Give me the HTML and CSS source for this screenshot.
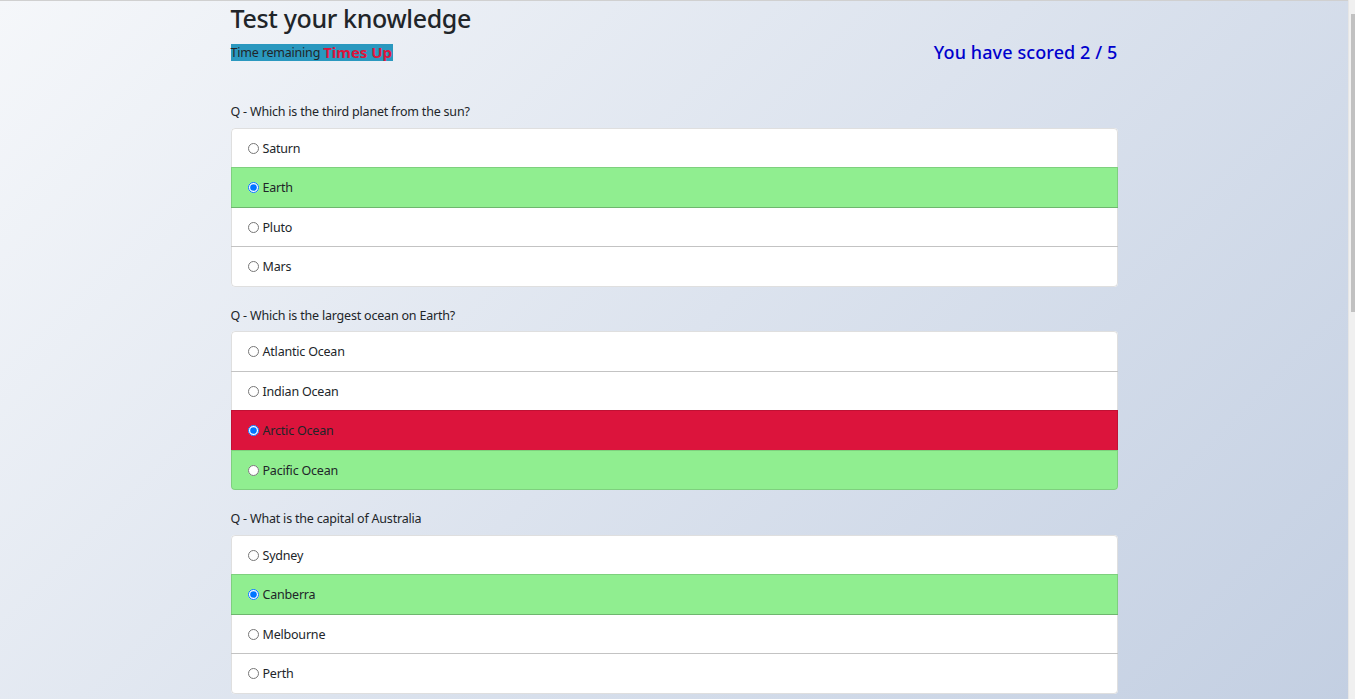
FILE: index.html
```html
<!DOCTYPE html>
<html lang="en">
<head>
<meta charset="utf-8">
<title>Quiz</title>
<link rel="stylesheet" href="styles.css">
</head>
<body>
<div class="container">
  <h3 class="title">Test your knowledge</h3>
  <div class="status">
    <span class="timer">Time remaining <b class="times-up">Times Up</b></span>
    <span class="score">You have scored 2 / 5</span>
  </div>

  <div class="question">
    <p class="q-text">Q - Which is the third planet from the sun?</p>
    <ul class="list-group">
      <li class="item"><label><input type="radio" name="q1">Saturn</label></li>
      <li class="item correct"><label><input type="radio" name="q1" checked>Earth</label></li>
      <li class="item"><label><input type="radio" name="q1">Pluto</label></li>
      <li class="item"><label><input type="radio" name="q1">Mars</label></li>
    </ul>
  </div>

  <div class="question">
    <p class="q-text">Q - Which is the largest ocean on Earth?</p>
    <ul class="list-group">
      <li class="item"><label><input type="radio" name="q2">Atlantic Ocean</label></li>
      <li class="item"><label><input type="radio" name="q2">Indian Ocean</label></li>
      <li class="item wrong"><label><input type="radio" name="q2" checked>Arctic Ocean</label></li>
      <li class="item correct"><label><input type="radio" name="q2">Pacific Ocean</label></li>
    </ul>
  </div>

  <div class="question">
    <p class="q-text">Q - What is the capital of Australia</p>
    <ul class="list-group">
      <li class="item"><label><input type="radio" name="q3">Sydney</label></li>
      <li class="item correct"><label><input type="radio" name="q3" checked>Canberra</label></li>
      <li class="item"><label><input type="radio" name="q3">Melbourne</label></li>
      <li class="item"><label><input type="radio" name="q3">Perth</label></li>
    </ul>
  </div>

  <div class="question">
    <p class="q-text">Q - Who wrote Romeo and Juliet?</p>
    <ul class="list-group">
      <li class="item"><label><input type="radio" name="q4">Charles Dickens</label></li>
      <li class="item correct"><label><input type="radio" name="q4">William Shakespeare</label></li>
      <li class="item wrong"><label><input type="radio" name="q4" checked>Jane Austen</label></li>
      <li class="item"><label><input type="radio" name="q4">Mark Twain</label></li>
    </ul>
  </div>

  <div class="question">
    <p class="q-text">Q - What is the chemical symbol for gold?</p>
    <ul class="list-group">
      <li class="item wrong"><label><input type="radio" name="q5" checked>Ag</label></li>
      <li class="item correct"><label><input type="radio" name="q5">Au</label></li>
      <li class="item"><label><input type="radio" name="q5">Gd</label></li>
      <li class="item"><label><input type="radio" name="q5">Go</label></li>
    </ul>
  </div>
</div>
<div class="scrollbar" aria-hidden="true"><div class="thumb"></div></div>
</body>
</html>
```

FILE: styles.css
```css
html {
  min-height: 100%;
  background: linear-gradient(135deg, #f5f7fa 0%, #c3cfe2 100%) fixed;
}
body {
  margin: 0 7px 0 0;
  border-top: 1px solid #d0d0d0;
  font-family: "Segoe UI", "Noto Sans", "Open Sans", sans-serif;
  color: #212529;
  font-size: 12.5px;
  letter-spacing: -0.2px;
  line-height: 1.5;
}
.container {
  width: 887px;
  margin: 0 auto;
  padding-bottom: 455px;
}
.title {
  margin: 0;
  padding-top: 1px;
  font-size: 25px;
  letter-spacing: -0.35px;
  font-weight: 500;
  line-height: 33px;
}
.status {
  display: flex;
  justify-content: space-between;
  align-items: center;
  height: 20px;
  margin-top: 7px;
  margin-bottom: 40px;
}
.timer {
  display: inline-flex;
  align-items: center;
  height: 17px;
  background: #2a98bf;
  font-size: 12.5px;
  line-height: 17px;
  padding-right: 1px;
}
.times-up {
  color: crimson;
  font-size: 15px;
  font-weight: 700;
  margin-left: 3px;
  letter-spacing: 0;
}
.score {
  color: mediumblue;
  font-size: 18px;
  letter-spacing: 0.1px;
  font-weight: 500;
  line-height: 20px;
}
.question {
  margin-bottom: 19px;
}
.q-text {
  margin: 0 0 6px;
  line-height: 19.5px;
}
.list-group {
  list-style: none;
  margin: 0;
  padding: 0;
  border-radius: 4px;
  background: #fff;
}
.item {
  border: 1px solid rgba(0, 0, 0, 0.125);
  margin-bottom: -1px;
  padding: 0 15px;
  height: 40.5px;
  display: flex;
  align-items: center;
  box-sizing: border-box;
}
.item:first-child {
  border-top-left-radius: 4px;
  border-top-right-radius: 4px;
}
.item:last-child {
  margin-bottom: 0;
  border-bottom-left-radius: 4px;
  border-bottom-right-radius: 4px;
}
.item label {
  display: flex;
  align-items: center;
  padding-top: 3px;
}
.item input {
  margin: 0 4px 2px 1px;
  width: 11px;
  height: 11px;
}
.correct {
  background: lightgreen;
}
.wrong {
  background: crimson;
}
.scrollbar {
  position: fixed;
  top: 0;
  right: 0;
  bottom: 0;
  width: 6px;
  background: #f0f0f0;
  border-left: 1px solid #e6e6e6;
}
.thumb {
  margin: 14px 0 0 2px;
  width: 4px;
  height: 298px;
  background: #c1c1c1;
}
```
